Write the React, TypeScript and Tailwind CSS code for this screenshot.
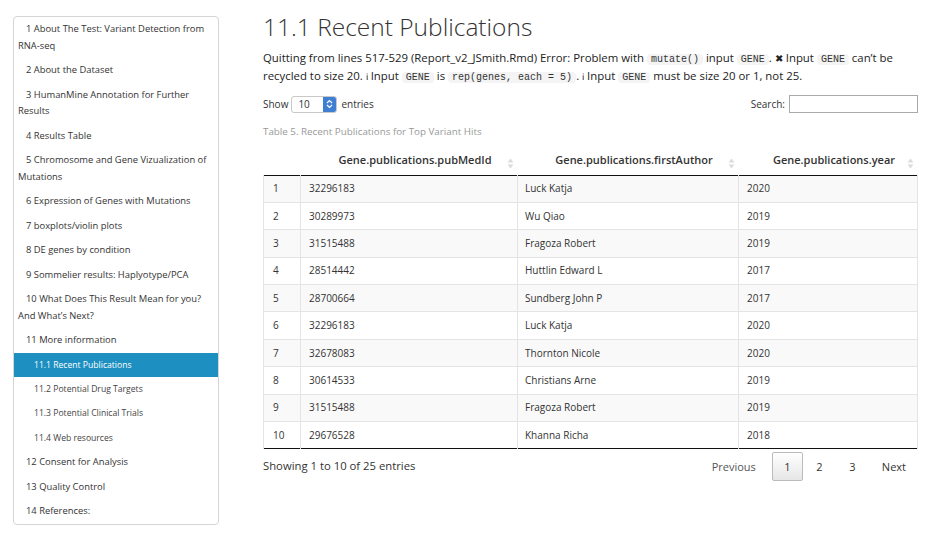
import React from "react";

const toc: { label: string; level: number; active?: boolean }[] = [
  { label: "1 About The Test: Variant Detection from RNA-seq", level: 1 },
  { label: "2 About the Dataset", level: 1 },
  { label: "3 HumanMine Annotation for Further Results", level: 1 },
  { label: "4 Results Table", level: 1 },
  { label: "5 Chromosome and Gene Vizualization of Mutations", level: 1 },
  { label: "6 Expression of Genes with Mutations", level: 1 },
  { label: "7 boxplots/violin plots", level: 1 },
  { label: "8 DE genes by condition", level: 1 },
  { label: "9 Sommelier results: Haplyotype/PCA", level: 1 },
  { label: "10 What Does This Result Mean for you? And What’s Next?", level: 1 },
  { label: "11 More information", level: 1 },
  { label: "11.1 Recent Publications", level: 2, active: true },
  { label: "11.2 Potential Drug Targets", level: 2 },
  { label: "11.3 Potential Clinical Trials", level: 2 },
  { label: "11.4 Web resources", level: 2 },
  { label: "12 Consent for Analysis", level: 1 },
  { label: "13 Quality Control", level: 1 },
  { label: "14 References:", level: 1 },
];

const rows = [
  ["32296183", "Luck Katja", "2020"],
  ["30289973", "Wu Qiao", "2019"],
  ["31515488", "Fragoza Robert", "2019"],
  ["28514442", "Huttlin Edward L", "2017"],
  ["28700664", "Sundberg John P", "2017"],
  ["32296183", "Luck Katja", "2020"],
  ["32678083", "Thornton Nicole", "2020"],
  ["30614533", "Christians Arne", "2019"],
  ["31515488", "Fragoza Robert", "2019"],
  ["29676528", "Khanna Richa", "2018"],
];

const Code = ({ children }: { children: React.ReactNode }) => (
  <code className="bg-[#f4f4f4] px-[4px] rounded-sm text-[10px] leading-none font-['Liberation_Mono',monospace] text-[#333]">
    {children}
  </code>
);

const SortIcon = () => (
  <svg width="7" height="11" viewBox="0 0 7 11" className="inline-block">
    <path d="M3.5 0.5 L6.5 4.5 H0.5 Z" fill="#dcdcdc" />
    <path d="M3.5 10.5 L6.5 6.5 H0.5 Z" fill="#dcdcdc" />
  </svg>
);

const App = () => {
  return (
    <div className="w-[936px] h-[552px] bg-white flex font-['Open_Sans',sans-serif] text-[#333] overflow-hidden">
      <div className="w-[263px] shrink-0 pl-[13px] pt-[16px]">
        <div className="w-[206px] border border-[#d4d4d4] rounded-[4px]">
          {toc.map((item) => (
            <div
              key={item.label}
              className={`${
                item.level === 1
                  ? "text-[9.4px] leading-[16.5px] pl-[4px] indent-[8px] py-[4px] text-[#333]"
                  : "text-[8.6px] leading-[16px] pl-[20px] py-[4.2px] text-[#444]"
              } ${item.active ? "bg-[#1d8fc0] text-white" : ""}`}
            >
              {item.label}
            </div>
          ))}
        </div>
      </div>

      <div className="w-[655px] pt-[11px]">
        <h1 className="text-[24.5px] leading-[32px] font-light text-[#333]">
          11.1 Recent Publications
        </h1>
        <p className="mt-[6px] text-[11.4px] leading-[18px] text-[#222]">
          Quitting from lines 517-529 (Report_v2_JSmith.Rmd) Error: Problem with{" "}
          <Code>mutate()</Code> input <Code>GENE</Code>. <span className="text-[10px]">✖</span> Input{" "}
          <Code>GENE</Code> can’t be recycled to size 20. <span className="text-[9px]">ℹ</span> Input{" "}
          <Code>GENE</Code> is <Code>rep(genes, each = 5)</Code>.{" "}
          <span className="text-[9px]">ℹ</span> Input <Code>GENE</Code> must be size 20 or 1, not 25.
        </p>

        <div className="mt-[9px] flex items-center justify-between text-[10px]">
          <div className="flex items-center gap-[3px]">
            <span>Show</span>
            <div className="flex items-center w-[46px] h-[17px] border border-[#c8c8c8] rounded-[3px] overflow-hidden bg-white">
              <span className="flex-1 pl-[6px] text-[10px]">10</span>
              <span className="w-[13px] h-full bg-[#3f7fd3] flex items-center justify-center">
                <svg width="7" height="10" viewBox="0 0 7 10">
                  <path d="M1 4 L3.5 1.5 L6 4" stroke="white" strokeWidth="1.2" fill="none" />
                  <path d="M1 6 L3.5 8.5 L6 6" stroke="white" strokeWidth="1.2" fill="none" />
                </svg>
              </span>
            </div>
            <span className="ml-[1px]">entries</span>
          </div>
          <div className="flex items-center gap-[4px]">
            <span>Search:</span>
            <div className="w-[129px] h-[18px] border border-[#aaa] bg-white" />
          </div>
        </div>

        <div className="mt-[12px] text-[9.8px] leading-[13px] text-[#999]">
          Table 5. Recent Publications for Top Variant Hits
        </div>

        <table className="mt-[7px] w-full border-collapse text-[10px]">
          <thead>
            <tr className="border-b border-[#111] h-[30px] text-[11px]">
              <th className="w-[37px]" />
              <th className="font-semibold text-center relative w-[217px] pl-[12px]">
                Gene.publications.pubMedId
                <span className="absolute right-[4px] top-[9px]"><SortIcon /></span>
              </th>
              <th className="font-semibold text-center relative w-[221px] pl-[12px]">
                Gene.publications.firstAuthor
                <span className="absolute right-[4px] top-[9px]"><SortIcon /></span>
              </th>
              <th className="font-semibold text-center relative pl-[12px]">
                Gene.publications.year
                <span className="absolute right-[4px] top-[9px]"><SortIcon /></span>
              </th>
            </tr>
          </thead>
          <tbody>
            {rows.map((r, i) => (
              <tr
                key={i}
                className={`h-[27.4px] ${i % 2 === 0 ? "bg-[#f9f9f9]" : "bg-white"} ${
                  i === rows.length - 1 ? "border-b border-[#111]" : "border-b border-[#e4e4e4]"
                }`}
              >
                <td className="px-[9px] border-x border-[#e4e4e4]">{i + 1}</td>
                <td className="px-[8px] border-r border-[#e4e4e4]">{r[0]}</td>
                <td className="px-[7px] border-r border-[#e4e4e4]">{r[1]}</td>
                <td className="px-[8px] border-r border-[#e4e4e4]">{r[2]}</td>
              </tr>
            ))}
          </tbody>
        </table>

        <div className="flex items-start justify-between mt-[3px]">
          <div className="text-[11.3px] mt-[6px]">Showing 1 to 10 of 25 entries</div>
          <div className="flex items-center text-[11px] mr-[12px]">
            <span className="text-[#555] mr-[16px]">Previous</span>
            <span className="w-[31px] h-[29px] flex items-center justify-center border border-[#bbb] rounded-[2px] bg-gradient-to-b from-white to-[#e6e6e6]">
              1
            </span>
            <span className="w-[33px] text-center">2</span>
            <span className="w-[33px] text-center">3</span>
            <span className="ml-[13px]">Next</span>
          </div>
        </div>
      </div>
    </div>
  );
};

export default App;
